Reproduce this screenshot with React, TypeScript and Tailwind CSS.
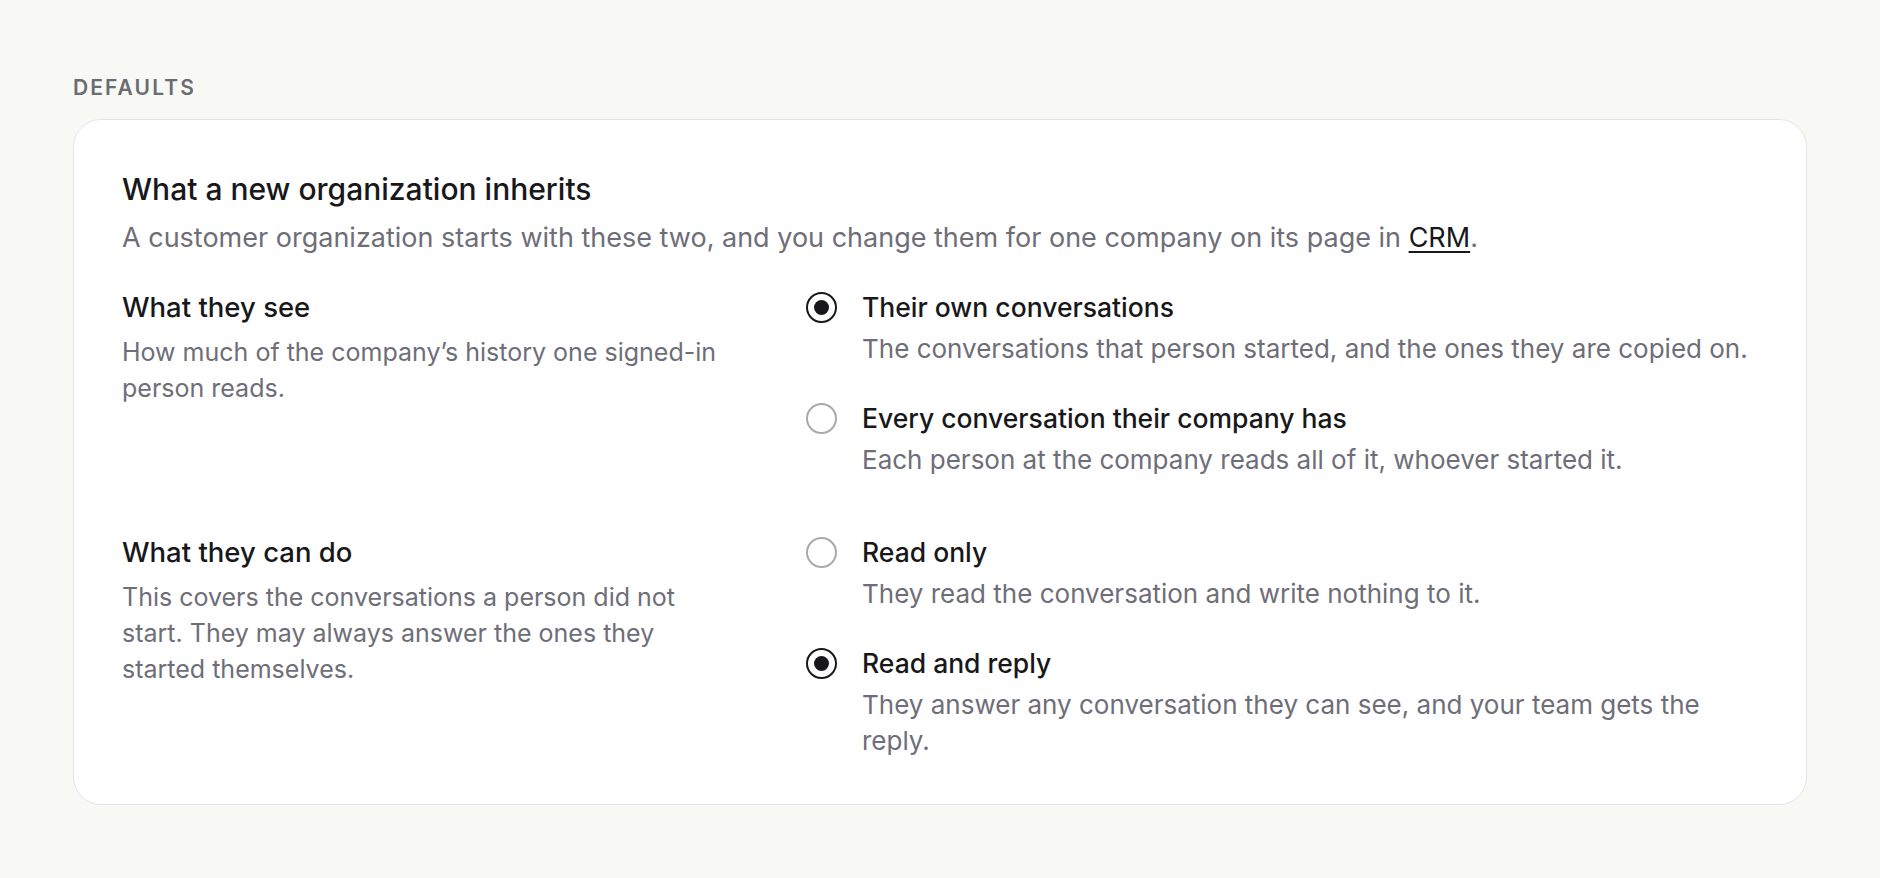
import { useState } from "react";

type Option = { value: string; label: string; hint: string };

const SEE_OPTIONS: Option[] = [
  {
    value: "own",
    label: "Their own conversations",
    hint: "The conversations that person started, and the ones they are copied on.",
  },
  {
    value: "company",
    label: "Every conversation their company has",
    hint: "Each person at the company reads all of it, whoever started it.",
  },
];

const DO_OPTIONS: Option[] = [
  {
    value: "read",
    label: "Read only",
    hint: "They read the conversation and write nothing to it.",
  },
  {
    value: "reply",
    label: "Read and reply",
    hint: "They answer any conversation they can see, and your team gets the reply.",
  },
];

function Radio({ checked }: { checked: boolean }) {
  return (
    <span
      className={[
        "flex h-[31px] w-[31px] shrink-0 items-center justify-center rounded-full bg-white",
        checked ? "border-[2.5px] border-[#18181b]" : "border-[2px] border-[#a8a8b0]",
      ].join(" ")}
    >
      {checked && <span className="h-[15px] w-[15px] rounded-full bg-[#18181b]" />}
    </span>
  );
}

function RadioGroup({
  options,
  value,
  onChange,
}: {
  options: Option[];
  value: string;
  onChange: (v: string) => void;
}) {
  return (
    <div className="flex flex-col gap-[35px]">
      {options.map((opt) => (
        <button
          key={opt.value}
          type="button"
          onClick={() => onChange(opt.value)}
          className="flex items-start gap-[25px] text-left"
        >
          <span className="flex h-8 items-center">
            <Radio checked={opt.value === value} />
          </span>
          <span className="flex flex-col">
            <span className="text-[26.5px] leading-8 font-medium text-[#18181b]">{opt.label}</span>
            <span className="mt-[8px] text-[26px] leading-[36px] text-[#6e6e78]">{opt.hint}</span>
          </span>
        </button>
      ))}
    </div>
  );
}

export default function App() {
  const [see, setSee] = useState("own");
  const [act, setAct] = useState("reply");

  return (
    <div
      className="min-h-screen bg-[#f8f8f5] px-[73px] pt-[76px] pb-16"
      style={{ fontFamily: "Inter, 'Noto Sans', sans-serif" }}
    >
      {/* section label */}
      <p className="text-[21px] leading-6 font-semibold tracking-[0.1em] text-[#6b6b74]">DEFAULTS</p>

      <div className="mt-[19px] rounded-[28px] border border-[#e4e4e8] bg-white px-12 pt-[51px] pb-[45px]">
        <h2 className="text-[30px] leading-9 font-medium text-[#18181b]">What a new organization inherits</h2>
        <p className="mt-[13px] text-[27px] leading-9 text-[#6e6e78]">
          A customer organization starts with these two, and you change them for one company on its page in{" "}
          <a href="#" className="text-[#18181b] underline decoration-2 underline-offset-4">
            CRM
          </a>
          .
        </p>

        <div className="mt-[35px] grid grid-cols-[615px_1fr] gap-x-[69px] gap-y-[58px]">
          <div>
            <h3 className="text-[27.5px] leading-8 font-medium text-[#18181b]">What they see</h3>
            <p className="mt-[11px] text-[25px] leading-[36px] text-[#6e6e78]">
              How much of the company’s history one signed-in person reads.
            </p>
          </div>
          <RadioGroup options={SEE_OPTIONS} value={see} onChange={setSee} />

          <div>
            <h3 className="text-[27.5px] leading-8 font-medium text-[#18181b]">What they can do</h3>
            <p className="mt-[11px] text-[25px] leading-[36px] text-[#6e6e78]">
              This covers the conversations a person did not start. They may always answer the ones they started
              themselves.
            </p>
          </div>
          <RadioGroup options={DO_OPTIONS} value={act} onChange={setAct} />
        </div>
      </div>
    </div>
  );
}
